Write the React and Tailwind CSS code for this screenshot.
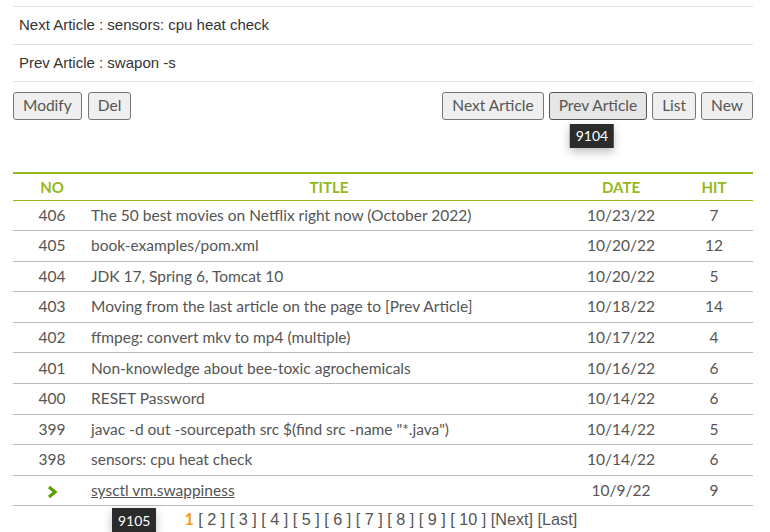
import React from 'react'

const rows = [
  { no: '406', title: 'The 50 best movies on Netflix right now (October 2022)', date: '10/23/22', hit: 7 },
  { no: '405', title: 'book-examples/pom.xml', date: '10/20/22', hit: 12 },
  { no: '404', title: 'JDK 17, Spring 6, Tomcat 10', date: '10/20/22', hit: 5 },
  { no: '403', title: 'Moving from the last article on the page to [Prev Article]', date: '10/18/22', hit: 14 },
  { no: '402', title: 'ffmpeg: convert mkv to mp4 (multiple)', date: '10/17/22', hit: 4 },
  { no: '401', title: 'Non-knowledge about bee-toxic agrochemicals', date: '10/16/22', hit: 6 },
  { no: '400', title: 'RESET Password', date: '10/14/22', hit: 6 },
  { no: '399', title: 'javac -d out -sourcepath src $(find src -name "*.java")', date: '10/14/22', hit: 5 },
  { no: '398', title: 'sensors: cpu heat check', date: '10/14/22', hit: 6 },
  { no: null, title: 'sysctl vm.swappiness', date: '10/9/22', hit: 9, current: true },
]

const sans = "font-['Lato',sans-serif]"
const arial = "font-['Liberation_Sans',Arial,sans-serif]"

function Btn({ children, active }) {
  return (
    <button
      className={`h-[28px] px-[9px] rounded-[3px] border text-[15.5px] leading-none text-[#555] ${sans} ${
        active ? 'bg-[#e6e6e6] border-[#555]' : 'bg-[#efefef] border-[#767676]'
      }`}
    >
      {children}
    </button>
  )
}

function Tip({ children }) {
  return (
    <span className={`inline-flex items-center justify-center h-[24px] px-[6px] bg-[#2b2b2b] text-white text-[14px] ${sans} shadow-[0_4px_10px_rgba(0,0,0,0.25)]`}>
      {children}
    </span>
  )
}

export default function App() {
  return (
    <div className="bg-white w-[770px] h-[532px] overflow-hidden">
      <div className="ml-[13px] w-[740px] pt-[6px]">
        <div className={`border-t border-[#e0e0e0] ${arial} text-[15px] text-[#333]`}>
          <div className="h-[38px] flex items-center pl-[6px] border-b border-[#e0e0e0]">
            Next Article : sensors: cpu heat check
          </div>
          <div className="h-[37px] flex items-center pl-[6px] border-b border-[#e0e0e0]">
            Prev Article : swapon -s
          </div>
        </div>

        <div className="flex justify-between mt-[10px]">
          <div className="flex gap-[6px]">
            <Btn>Modify</Btn>
            <Btn>Del</Btn>
          </div>
          <div className="flex gap-[5px]">
            <Btn>Next Article</Btn>
            <div className="relative">
              <Btn active>Prev Article</Btn>
              <div className="absolute left-[calc(50%-6px)] -translate-x-1/2 top-[31px]">
                <Tip>9104</Tip>
              </div>
            </div>
            <Btn>List</Btn>
            <Btn>New</Btn>
          </div>
        </div>

        <table className={`w-full mt-[52px] border-t-2 border-[#95b81c] ${sans} text-[15.5px] text-[#555]`}>
          <thead>
            <tr className="h-[27px] border-b border-[#95b81c] text-[#95b81c] font-bold text-[15px]">
              <th className="w-[78px] font-bold">NO</th>
              <th className="font-bold">TITLE</th>
              <th className="w-[108px] font-bold">DATE</th>
              <th className="w-[78px] font-bold">HIT</th>
            </tr>
          </thead>
          <tbody>
            {rows.map((r, i) => (
              <tr key={i} className="h-[30.6px] border-b border-[#bbb]">
                <td className="text-center">
                  {r.current ? (
                    <svg className="inline-block" width="11" height="12" viewBox="0 0 11 12">
                      <path d="M2 1 L8 6 L2 11" fill="none" stroke="#5a9e00" strokeWidth="3.2" />
                    </svg>
                  ) : (
                    r.no
                  )}
                </td>
                <td>
                  {r.current ? <span className="underline">{r.title}</span> : r.title}
                </td>
                <td className="text-center">{r.date}</td>
                <td className="text-center">{r.hit}</td>
              </tr>
            ))}
          </tbody>
        </table>

        <div className="flex items-center h-[26px]">
          <div className="ml-[99px] mt-[1px]">
            <Tip>9105</Tip>
          </div>
          <div className={`ml-[28px] ${arial} text-[16.2px] text-[#555]`}>
            <span className={`${sans} font-bold text-[#f39c12]`}>1</span> [ 2 ] [ 3 ] [ 4 ] [ 5 ] [ 6 ] [ 7 ] [ 8 ] [ 9 ] [ 10 ] [Next] [Last]
          </div>
        </div>
      </div>
    </div>
  )
}
